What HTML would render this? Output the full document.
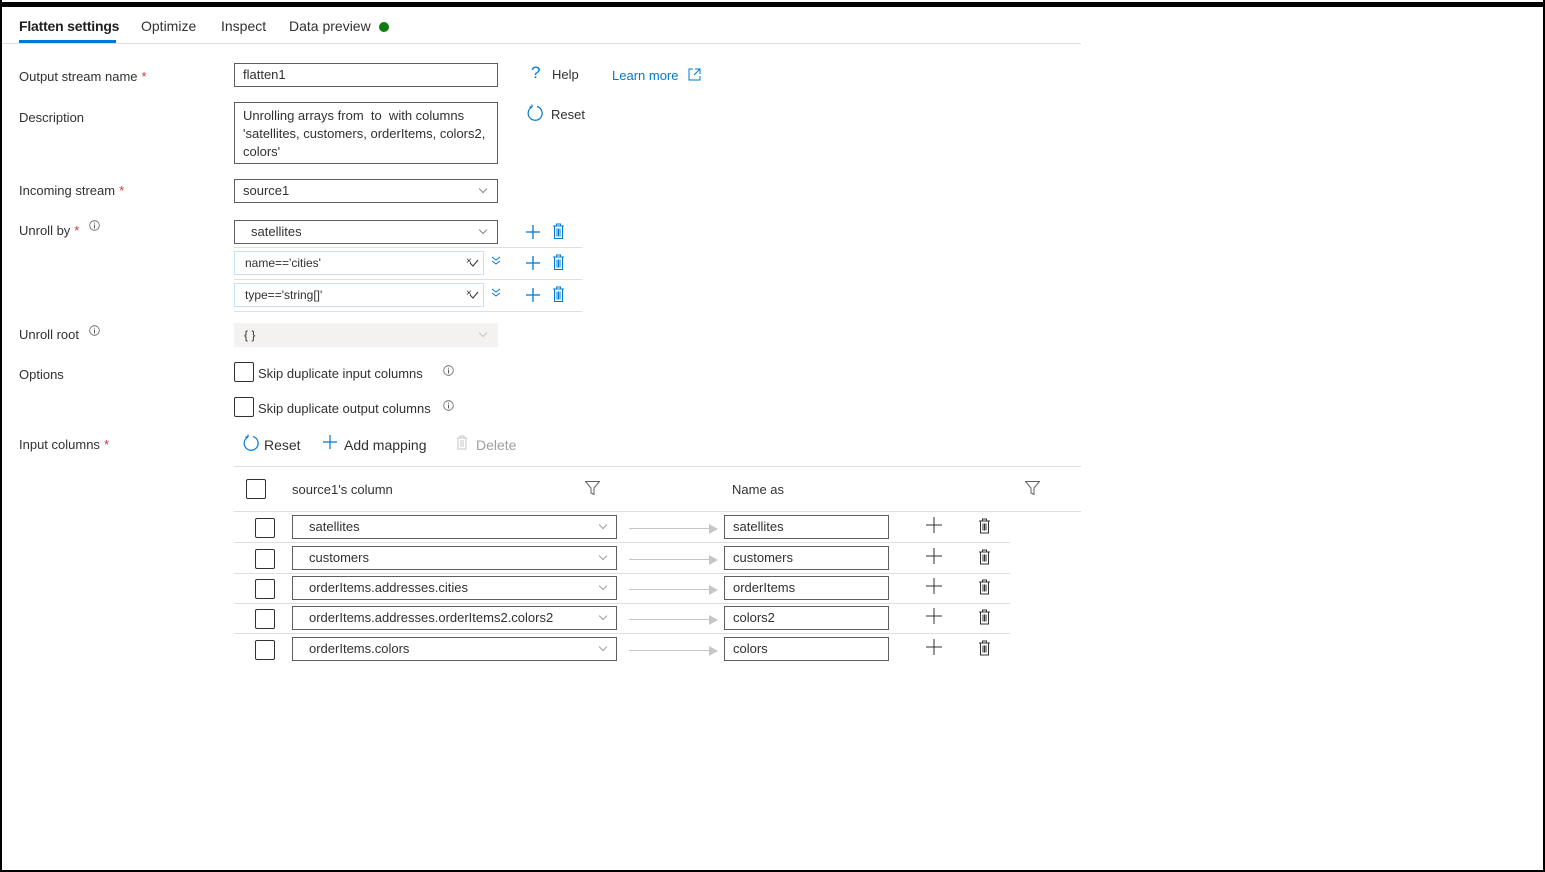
<!DOCTYPE html>
<html><head><meta charset="utf-8"><style>
*{box-sizing:border-box;margin:0;padding:0}
body{width:1545px;height:872px;background:#fff;font-family:"Liberation Sans",sans-serif;font-size:13px;color:#323130;position:relative;overflow:hidden}
.a{position:absolute}
.lbl{position:absolute;left:19px;font-size:13px;color:#323130}
.req{color:#d13438;margin-left:4px}
.inp{position:absolute;border:1px solid #605e5c;background:#fff;padding-left:8px;font-size:13px;line-height:22px;height:24px}
.chev{position:absolute;width:6px;height:6px;border-right:1px solid #8a8886;border-bottom:1px solid #8a8886;transform:rotate(45deg)}
.cb{position:absolute;width:20px;height:20px;border:1px solid #323130;border-radius:2px;background:#fff}
.hl{position:absolute;height:1px;background:#e1dfdd}
</style></head><body>
<div class="a" style="left:0;top:2px;width:1545px;height:5px;background:#000"></div>
<div class="a" style="left:0;top:0;width:2px;height:872px;background:#000"></div>
<div class="a" style="right:0;top:0;width:2px;height:872px;background:#000"></div>
<div class="a" style="left:0;bottom:0;width:1545px;height:2px;background:#000"></div>

<div class="a" style="left:19px;top:18px;font-size:14px;color:#201f1e;font-weight:bold;letter-spacing:-0.2px">Flatten settings</div>
<div class="a" style="left:19px;top:40px;width:97px;height:3px;background:#0078d4"></div>
<div class="a" style="left:141px;top:18px;font-size:14px">Optimize</div>
<div class="a" style="left:221px;top:18px;font-size:14px">Inspect</div>
<div class="a" style="left:289px;top:18px;font-size:14px">Data preview</div>
<div class="a" style="left:379px;top:22px;width:10px;height:10px;border-radius:50%;background:#107c10"></div>
<div class="hl" style="left:2px;top:43px;width:1079px"></div>

<div class="lbl" style="top:69px">Output stream name<span class="req">*</span></div>
<div class="inp" style="left:234px;top:63px;width:264px">flatten1</div>
<div class="a" style="left:531px;top:63px;font-size:17px;color:#0078d4">?</div>
<div class="a" style="left:552px;top:67px">Help</div>
<div class="a" style="left:612px;top:68px;color:#0078d4">Learn more</div>
<svg class="a" style="left:688px;top:68px" width="13" height="13"><path d="M5 1H1v11h11V8M7 1h5v5M12 1L6 7" fill="none" stroke="#0078d4"/></svg>

<div class="lbl" style="top:110px">Description</div>
<div class="inp" style="left:234px;top:102px;width:264px;height:62px;line-height:18px;padding-top:4px">Unrolling arrays from&nbsp; to&nbsp; with columns 'satellites, customers, orderItems, colors2, colors'</div>
<svg class="a" style="left:526px;top:104px" width="18" height="18"><path d="M6 3A7 7 0 1 0 11 2.5M6 3V0.5M6 3H3.5" fill="none" stroke="#0078d4" stroke-width="1.2"/></svg>
<div class="a" style="left:551px;top:107px">Reset</div>

<div class="lbl" style="top:183px">Incoming stream<span class="req">*</span></div>
<div class="inp" style="left:234px;top:179px;width:264px">source1</div>
<div class="chev" style="left:480px;top:186px"></div>

<div class="lbl" style="top:223px">Unroll by<span class="req">*</span></div>
<svg class="a" style="left:89px;top:220px" width="11" height="11"><circle cx="5.5" cy="5.5" r="4.8" fill="none" stroke="#605e5c" stroke-width=".8"/><path d="M5.5 4.5v4M5.5 2.8v.8" stroke="#605e5c"/></svg>
<div class="inp" style="left:234px;top:220px;width:264px;padding-left:16px">satellites</div>
<div class="chev" style="left:480px;top:227px"></div>
<div class="hl" style="left:234px;top:247px;width:348px"></div>
<div class="inp" style="left:234px;top:251px;width:250px;border-color:#c7e0f4;padding-left:10px;font-size:12px">name=='cities'</div>
<div class="hl" style="left:234px;top:279px;width:348px"></div>
<div class="inp" style="left:234px;top:283px;width:250px;border-color:#c7e0f4;padding-left:10px;font-size:12px">type=='string[]'</div>
<div class="hl" style="left:234px;top:311px;width:348px"></div>

<div class="lbl" style="top:327px">Unroll root</div>
<svg class="a" style="left:89px;top:325px" width="11" height="11"><circle cx="5.5" cy="5.5" r="4.8" fill="none" stroke="#605e5c" stroke-width=".8"/><path d="M5.5 4.5v4M5.5 2.8v.8" stroke="#605e5c"/></svg>
<div class="a" style="left:234px;top:323px;width:264px;height:24px;background:#f3f2f1;padding-left:10px;line-height:24px;font-size:12px">{ }</div>
<div class="chev" style="left:480px;top:330px;border-color:#c8c6c4"></div>

<div class="lbl" style="top:367px;font-weight:bold;font-weight:normal">Options</div>
<div class="cb" style="left:234px;top:362px"></div>
<div class="a" style="left:258px;top:366px">Skip duplicate input columns</div>
<div class="cb" style="left:234px;top:397px"></div>
<div class="a" style="left:258px;top:401px">Skip duplicate output columns</div>
<svg class="a" style="left:443px;top:365px" width="11" height="11"><circle cx="5.5" cy="5.5" r="4.8" fill="none" stroke="#605e5c" stroke-width=".8"/><path d="M5.5 4.5v4M5.5 2.8v.8" stroke="#605e5c"/></svg>
<svg class="a" style="left:443px;top:400px" width="11" height="11"><circle cx="5.5" cy="5.5" r="4.8" fill="none" stroke="#605e5c" stroke-width=".8"/><path d="M5.5 4.5v4M5.5 2.8v.8" stroke="#605e5c"/></svg>

<div class="lbl" style="top:437px">Input columns<span class="req">*</span></div>
<svg class="a" style="left:242px;top:434px" width="18" height="18"><path d="M6 3A7 7 0 1 0 11 2.5M6 3V0.5M6 3H3.5" fill="none" stroke="#0078d4" stroke-width="1.2"/></svg>
<div class="a" style="left:264px;top:437px;font-size:14px">Reset</div>
<svg class="a" style="left:322px;top:434px" width="16" height="16"><path d="M8 1v14M1 8h14" stroke="#0078d4" stroke-width="1.2"/></svg>
<div class="a" style="left:344px;top:437px;font-size:14px">Add mapping</div>
<svg class="a" style="left:456px;top:435px" width="12" height="15"><path d="M1 3h10M4 3V1h4v2M2 3v11h8V3M5 5v7M7 5v7" fill="none" stroke="#c8c6c4"/></svg>
<div class="a" style="left:476px;top:437px;font-size:14px;color:#a19f9d">Delete</div>

<div class="hl" style="left:234px;top:466px;width:847px"></div>
<div class="cb" style="left:246px;top:479px"></div>
<div class="a" style="left:292px;top:482px">source1's column</div>
<svg class="a" style="left:585px;top:481px" width="15" height="14"><path d="M0.5 0.5h14L9 7v6.5L6 12V7z" fill="none" stroke="#605e5c"/></svg>
<div class="a" style="left:732px;top:482px">Name as</div>
<svg class="a" style="left:1025px;top:481px" width="15" height="14"><path d="M0.5 0.5h14L9 7v6.5L6 12V7z" fill="none" stroke="#605e5c"/></svg>
<div class="hl" style="left:234px;top:511px;width:847px"></div>

<div id="rows"></div>
<script>
var names=[["satellites","satellites"],["customers","customers"],["orderItems.addresses.cities","orderItems"],["orderItems.addresses.orderItems2.colors2","colors2"],["orderItems.colors","colors"]];
var tops=[515,546,576,606,637],h="";
names.forEach(function(n,i){var t=tops[i];
h+='<div class="cb" style="left:255px;top:'+(t+3)+'px"></div>';
h+='<div class="inp" style="left:292px;top:'+t+'px;width:325px;padding-left:16px">'+n[0]+'</div>';
h+='<div class="chev" style="left:600px;top:'+(t+7)+'px;border-color:#a19f9d"></div>';
h+='<div class="a" style="left:629px;top:'+(t+13)+'px;width:82px;height:1px;background:#c8c6c4"></div>';
h+='<svg class="a" style="left:709px;top:'+(t+9)+'px" width="10" height="10"><path d="M0 0l9 5-9 5z" fill="#c8c6c4"/></svg>';
h+='<div class="inp" style="left:724px;top:'+t+'px;width:165px">'+n[1]+'</div>';
h+='<svg class="a" style="left:926px;top:'+(t+2)+'px" width="16" height="16"><path d="M8 0v16M0 8h16" stroke="#323130" stroke-width="1"/></svg>';
h+='<svg class="a" style="left:978px;top:'+(t+3)+'px" width="13" height="16"><path d="M1 3h11M4.5 3V1h4v2M2.5 3v12h8V3M5 5.5v7M6.5 5.5v7M8 5.5v7" fill="none" stroke="#323130"/></svg>';
if(i<4)h+='<div class="hl" style="left:234px;top:'+(t+27)+'px;width:776px"></div>';
});
[[229],[260],[292]].forEach(function(a,i){var t=a[0];
h+='<svg class="a" style="left:525px;top:'+(t-5)+'px" width="16" height="16"><path d="M8 1v14M1 8h14" stroke="#0078d4" stroke-width="1.3"/></svg>';
h+='<svg class="a" style="left:552px;top:'+(t-6)+'px" width="13" height="17"><path d="M1 3h11M4.5 3V1h4v2M2.5 3v12.5h8V3M5 5.5v8M6.5 5.5v8M8 5.5v8" fill="none" stroke="#0078d4"/></svg>';
if(i>0){h+='<div class="a" style="left:466px;top:'+(t-4)+'px;font-size:10px;color:#323130">×</div><svg class="a" style="left:469px;top:'+(t-1)+'px" width="10" height="8"><path d="M1 4l3 3 5-6" fill="none" stroke="#323130"/></svg>';
h+='<svg class="a" style="left:491px;top:'+(t-4)+'px" width="10" height="10"><path d="M1 1l4 3 4-3M1 5l4 3 4-3" fill="none" stroke="#0078d4"/></svg>';}
});
document.getElementById('rows').innerHTML=h;
</script>
</body></html>
